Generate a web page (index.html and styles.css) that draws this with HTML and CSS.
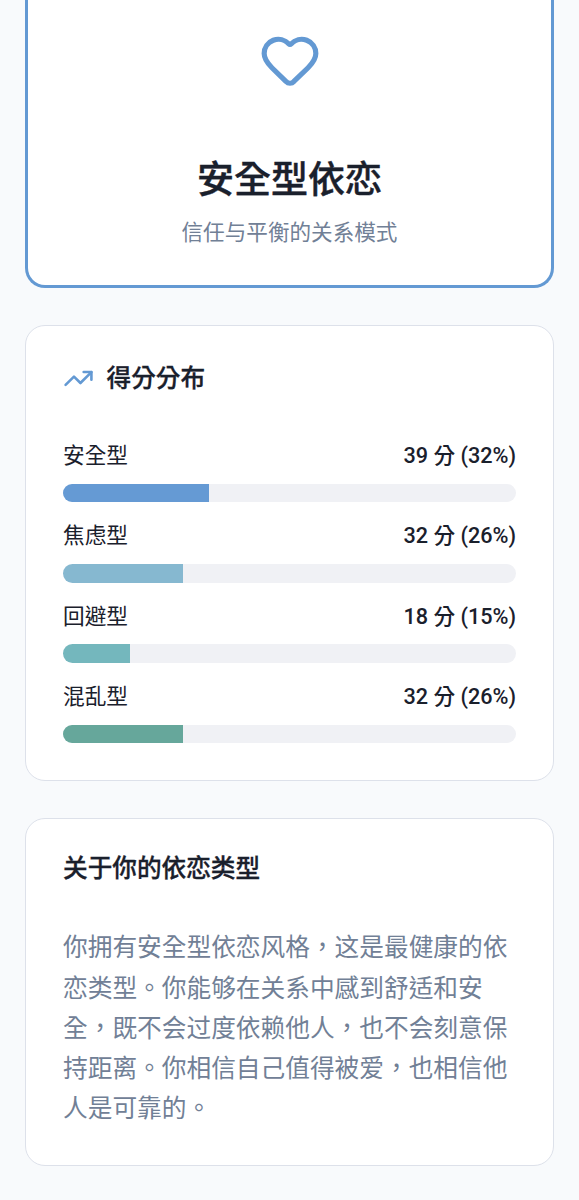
FILE: index.html
```html
<!DOCTYPE html>
<html lang="zh-Hant">
  <head>
    <meta charset="UTF-8" />
    <meta name="viewport" content="width=device-width, initial-scale=1.0" />
    <title>依恋类型</title>
    <link rel="stylesheet" href="styles.css">
  </head>
  <body>
    <main class="result">
      <section class="card type-card">
        <svg class="heart-icon" viewBox="0 0 24 24">
          <path d="M2 9.5a5.5 5.5 0 0 1 9.591-3.676.56.56 0 0 0 .818 0A5.49 5.49 0 0 1 22 9.5c0 2.29-1.5 4-3 5.5l-5.492 5.313a2 2 0 0 1-3 .019L5 15c-1.5-1.5-3-3.2-3-5.5" />
        </svg>
        <h1>安全型依恋</h1>
        <p class="subtitle">信任与平衡的关系模式</p>
      </section>

      <section class="card score-card">
        <h2 class="score-title">
          <svg class="trend-icon" viewBox="0 0 24 24">
            <path d="M16 7h6v6" />
            <path d="m22 7-8.5 8.5-5-5L2 17" />
          </svg>
          得分分布
        </h2>

        <div class="score-list">
          <div class="score">
            <div class="score-row">
              <span>安全型</span>
              <span class="score-value">39 分 (32%)</span>
            </div>
            <div class="bar"><div class="fill secure" style="width: 32.23%"></div></div>
          </div>

          <div class="score">
            <div class="score-row">
              <span>焦虑型</span>
              <span class="score-value">32 分 (26%)</span>
            </div>
            <div class="bar"><div class="fill anxious" style="width: 26.45%"></div></div>
          </div>

          <div class="score">
            <div class="score-row">
              <span>回避型</span>
              <span class="score-value">18 分 (15%)</span>
            </div>
            <div class="bar"><div class="fill avoidant" style="width: 14.88%"></div></div>
          </div>

          <div class="score">
            <div class="score-row">
              <span>混乱型</span>
              <span class="score-value">32 分 (26%)</span>
            </div>
            <div class="bar"><div class="fill disorganized" style="width: 26.45%"></div></div>
          </div>
        </div>
      </section>

      <section class="card about-card">
        <h2>关于你的依恋类型</h2>
        <p class="about-text">你拥有安全型依恋风格，这是最健康的依恋类型。你能够在关系中感到舒适和安全，既不会过度依赖他人，也不会刻意保持距离。你相信自己值得被爱，也相信他人是可靠的。</p>
      </section>
    </main>
  </body>
</html>
```
FILE: styles.css
```css
* {
  box-sizing: border-box;
}

body {
  margin: 0;
  background-color: #f8fafc;
  color: #1a202c;
  font-family: Roboto, "Noto Sans CJK TC", sans-serif;
}

h1,
h2,
p {
  margin: 0;
}

svg {
  fill: none;
  stroke: #6399d3;
  stroke-width: 2;
  stroke-linecap: round;
  stroke-linejoin: round;
}

.result {
  display: flex;
  flex-direction: column;
  gap: 37px;
  padding: 0 25px 33px;
}

.card {
  padding: 37px;
  background-color: #fff;
  border: 1px solid #dde1ea;
  border-radius: 20px;
}

.type-card {
  display: flex;
  flex-direction: column;
  align-items: center;
  height: 288px;
  padding: 29px 37px 0;
  border: 3px solid #6399d3;
  border-top: 0;
  border-radius: 0 0 20px 20px;
}

.heart-icon {
  width: 62px;
  height: 62px;
}

h1 {
  margin-top: 65px;
  font-size: 37px;
  font-weight: 500;
  line-height: 50px;
  -webkit-text-stroke: 0.4px;
}

.subtitle {
  margin-top: 11px;
  color: #718096;
  font-size: 21.6px;
  line-height: 31px;
}

h2 {
  font-size: 24.65px;
  font-weight: 500;
  line-height: 25px;
  -webkit-text-stroke: 0.3px;
}

.score-card {
  height: 456.4px;
}

.score-title {
  display: flex;
  align-items: center;
  gap: 12.5px;
  height: 31px;
}

.trend-icon {
  width: 31px;
  height: 31px;
}

.score-list {
  display: flex;
  flex-direction: column;
  gap: 18px;
  margin-top: 46px;
}

.score-row {
  display: flex;
  justify-content: space-between;
  margin-bottom: 12.8px;
  font-size: 21.65px;
  line-height: 31px;
}

.score-value {
  font-weight: 500;
}

.bar {
  height: 18.5px;
  overflow: hidden;
  background-color: #f0f1f5;
  border-radius: 10px;
}

.fill {
  height: 100%;
}

.secure {
  background-color: #659ad4;
}

.anxious {
  background-color: #86b8d0;
}

.avoidant {
  background-color: #74b7bd;
}

.disorganized {
  background-color: #66a79b;
}

.about-card {
  height: 347.6px;
}

.about-text {
  margin-top: 47px;
  color: #718096;
  font-size: 24.7px;
  line-height: 40.2px;
}
```
